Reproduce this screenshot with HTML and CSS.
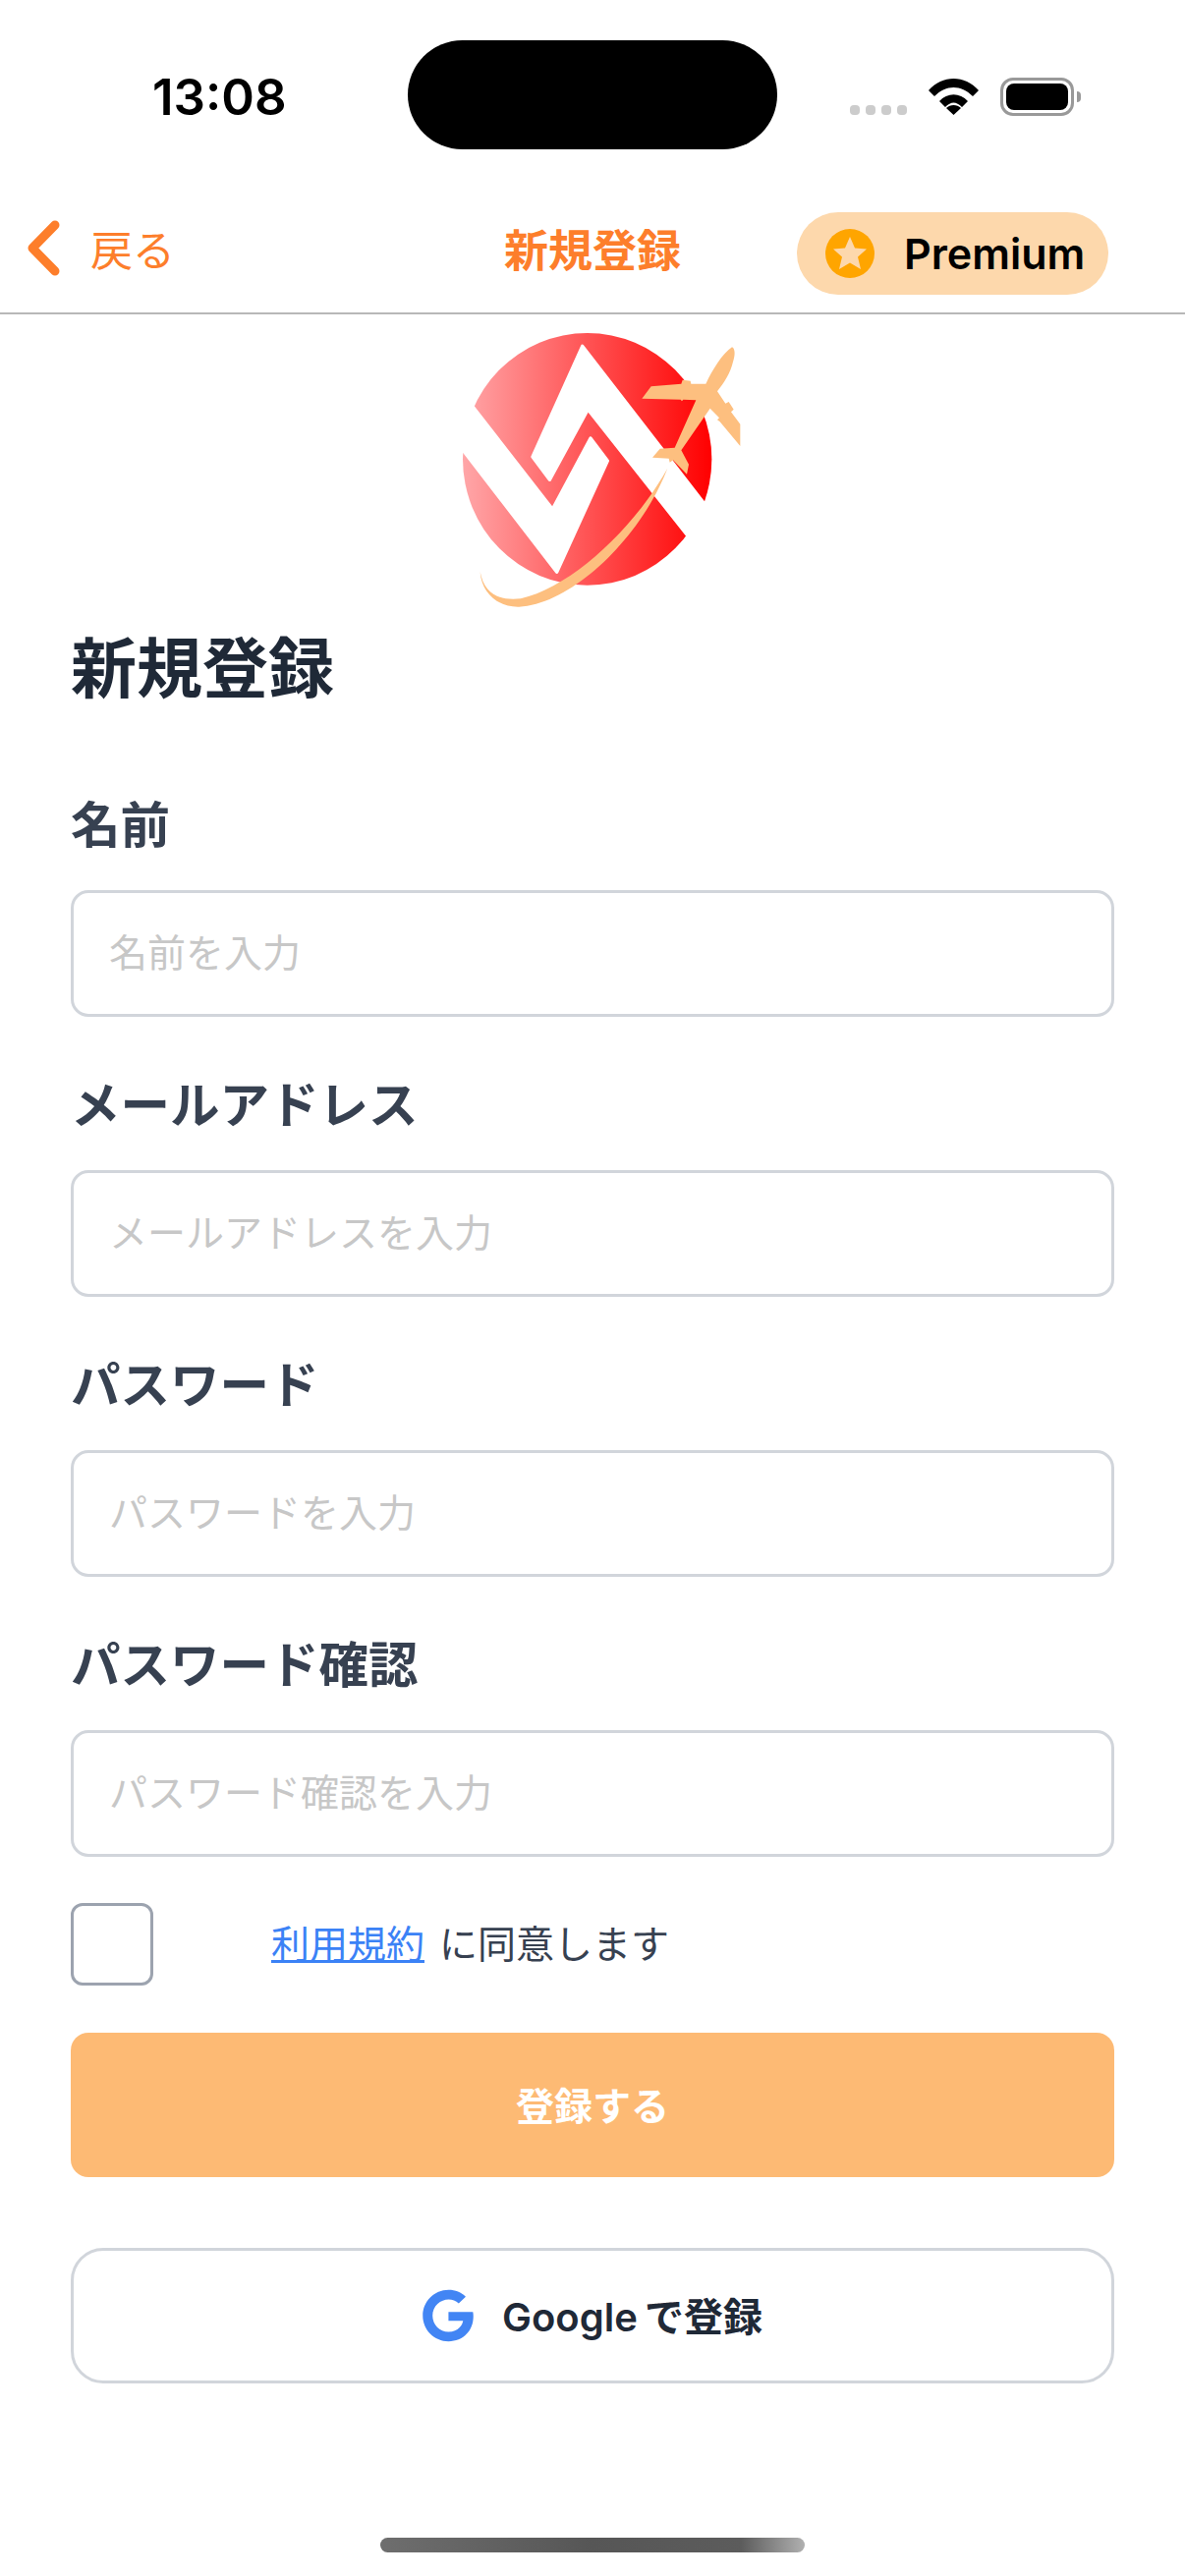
FILE: index.html
```html
<!DOCTYPE html>
<html lang="ja">
<head>
<meta charset="UTF-8">
<meta name="viewport" content="width=device-width, initial-scale=1.0">
<title>新規登録</title>
<link rel="stylesheet" href="styles.css">
</head>
<body>
<div class="page">
    <div class="status-bar">
        <div class="time">13:08</div>
        <div class="island"></div>
        <div class="status-icons">
            <div class="signal"><span></span><span></span><span></span><span></span></div>
            <svg class="wifi" viewBox="0 0 51 37" width="51" height="37">
                <path d="M0 12C14-4 37-4 51 12L45 18C33 6 18 6 6 18Z"/>
                <path d="M11 23C19 14 32 14 40 23L34 29C28 23 23 23 17 29Z"/>
                <path d="M25.5 37L18 30C22 26 29 26 33 30Z"/>
            </svg>
            <div class="battery"><div class="battery-level"></div></div>
            <div class="battery-nub"></div>
        </div>
    </div>

    <header class="nav">
        <a class="back">
            <svg viewBox="0 0 33 57" width="33" height="57">
                <path d="M28 5L5 28.5L28 52" fill="none" stroke="#fd7e2b" stroke-width="9" stroke-linecap="round" stroke-linejoin="round"/>
            </svg>
            <span>戻る</span>
        </a>
        <div class="nav-title">新規登録</div>
        <div class="premium">
            <svg class="premium-star" viewBox="0 0 50 50" width="50" height="50">
                <circle cx="25" cy="25" r="25" fill="#ffa500"/>
                <path d="M25 8L30 19.500L42 20.500L33 28.500L36 41L25 34.500L14 41L17 28.500L8 20.500L20 19.500Z" fill="#fdd8ac"/>
            </svg>
            <span>Premium</span>
        </div>
    </header>

    <svg class="logo" viewBox="0 0 990 930" width="330" height="310">
        <defs>
            <linearGradient id="logoRed" x1="0" y1="0" x2="1" y2="0">
                <stop offset="0" stop-color="#ffa6a8"/>
                <stop offset="1" stop-color="#ff0000"/>
            </linearGradient>
        </defs>
        <ellipse cx="473" cy="442" rx="380" ry="385" fill="url(#logoRed)"/>
        <g fill="#fff" stroke="#fff" stroke-width="10" stroke-linejoin="round">
            <path d="M458 97L900 668L850 765L475 290L358 505L306 435Z"/>
            <path d="M60 200L367 595L483 378L535 447L380 787L40 345Z"/>
        </g>
        <g fill="#fdbf7f">
            <path d="M146 786C150 850 200 895 265 893C425 885 635 685 718 470C615 655 425 832 270 868C200 876 158 850 146 786Z"/>
            <path d="M915 100C925 105 925 125 918 145C910 180 890 210 870 235L895 272L905 267L920 290L912 298L940 335V402L878 328L870 322L876 316L848 287L760 415L783 458L777 488L735 445L725 452L722 440L672 437L695 410L740 407L805 262L766 260L762 265L758 260L640 257L668 220L760 212L764 200L788 203L790 212L835 212C855 170 885 120 915 100Z"/>
        </g>
    </svg>

    <main class="form">
        <h1>新規登録</h1>

        <div class="fields">
            <div class="field">
                <label>名前</label>
                <input type="text" placeholder="名前を入力">
            </div>
            <div class="field">
                <label>メールアドレス</label>
                <input type="text" placeholder="メールアドレスを入力">
            </div>
            <div class="field">
                <label>パスワード</label>
                <input type="password" placeholder="パスワードを入力">
            </div>
            <div class="field">
                <label>パスワード確認</label>
                <input type="password" placeholder="パスワード確認を入力">
            </div>
        </div>

        <div class="terms">
            <input type="checkbox" class="terms-check">
            <p><a class="terms-link">利用規約</a><span class="terms-text">に同意します</span></p>
        </div>

        <button class="submit">登録する</button>

        <button class="google">
            <svg viewBox="0 0 488 512" width="52" height="54">
                <path fill="#4285f4" d="M488 261.800C488 403.300 391.100 504 248 504C110.800 504 0 393.200 0 256S110.800 8 248 8C314.800 8 371 32.500 414.300 72.900L346.800 137.800C258.500 52.600 94.300 116.600 94.300 256C94.300 342.500 163.400 412.600 248 412.600C346.200 412.600 383 342.200 388.800 305.700H248V220.400H484.100C486.400 233.100 488 245.300 488 261.800Z"/>
            </svg>
            <span>Google で登録</span>
        </button>
    </main>

    <div class="home-bar"></div>
</div>
</body>
</html>
```

FILE: styles.css
```css
* {
    box-sizing: border-box;
}

body {
    margin: 0;
    background-color: #fff;
    font-family: Inter, "Noto Sans CJK JP", sans-serif;
}

.page {
    display: flex;
    flex-direction: column;
    width: 1206px;
    height: 2622px;
    overflow: hidden;
}

/* status bar */
.status-bar {
    display: flex;
    height: 198px;
    padding-top: 41px;
}

.time {
    width: 415px;
    padding: 28px 0 0 155px;
    font-size: 51px;
    line-height: 60px;
    font-weight: 600;
    color: #000;
}

.island {
    width: 376px;
    height: 111px;
    border-radius: 56px;
    background-color: #000;
}

.status-icons {
    display: flex;
    align-items: flex-end;
    height: 76px;
    padding-left: 74px;
}

.signal {
    display: flex;
    gap: 6px;
    margin-right: 22px;
}

.signal span {
    width: 10px;
    height: 10px;
    border-radius: 4px;
    background-color: #ccc;
}

.wifi {
    margin-right: 22px;
}

.battery {
    width: 75px;
    height: 39px;
    margin-bottom: -1px;
    padding: 3px;
    border: 3px solid #999;
    border-radius: 13px;
}

.battery-level {
    height: 100%;
    border-radius: 8px;
    background-color: #000;
}

.battery-nub {
    width: 4px;
    height: 11px;
    margin: 0 0 13px 3px;
    border-radius: 0 4px 4px 0;
    background-color: #999;
}

/* header */
.nav {
    display: grid;
    grid-template-columns: 1fr auto 1fr;
    align-items: center;
    height: 122px;
    padding: 0 78px 0 28px;
    border-bottom: 2px solid #b8b8b8;
}

.back {
    display: flex;
    align-items: center;
    gap: 31px;
    margin-bottom: 12px;
    font-size: 43px;
    color: #fd7e2b;
}

.nav-title {
    margin: 0 0 12px 50px;
    font-size: 45px;
    font-weight: 700;
    color: #fd7e2b;
}

.premium {
    display: flex;
    align-items: center;
    justify-self: end;
    gap: 30px;
    width: 317px;
    height: 84px;
    padding-left: 29px;
    border-radius: 42px;
    background-color: #fdd8ac;
    font-size: 43px;
    line-height: 80px;
    font-weight: 600;
    color: #000;
}

.premium-star {
    flex-shrink: 0;
}

.logo {
    display: block;
    flex-shrink: 0;
    margin-left: 440px;
}

/* form */
.form {
    padding: 0 72px;
}

.form h1 {
    margin: 3px 0 70px;
    font-size: 67px;
    line-height: 96px;
    font-weight: 700;
    color: #1f2937;
}

.fields {
    display: flex;
    flex-direction: column;
    gap: 49px;
}

.field label {
    display: block;
    margin-bottom: 23px;
    font-size: 50.500px;
    line-height: 82px;
    padding-bottom: 2px;
    font-weight: 700;
    color: #374151;
}

.field input {
    display: block;
    width: 100%;
    height: 129px;
    padding: 0 36px 2px;
    border: 3px solid #d1d5db;
    border-radius: 18px;
    outline: none;
    font-family: inherit;
    font-size: 39px;
}

.field input::placeholder {
    color: #c7c7c7;
}

.terms {
    display: flex;
    align-items: center;
    gap: 120px;
    margin-top: 47px;
}

.terms-check {
    appearance: none;
    width: 84px;
    height: 84px;
    margin: 0;
    border: 3px solid #9ca3af;
    border-radius: 12px;
}

.terms p {
    margin: 0 0 6px;
    font-size: 39px;
    color: #374151;
}

.terms-link {
    color: #3b82f6;
    text-decoration: underline;
}

.terms-text {
    margin-left: 15px;
}

.submit {
    display: block;
    width: 100%;
    height: 147px;
    margin-top: 48px;
    padding-bottom: 5px;
    border: none;
    border-radius: 18px;
    background-color: #fdba74;
    font-family: inherit;
    font-size: 39px;
    font-weight: 600;
    color: #fff;
}

.google {
    display: flex;
    align-items: center;
    justify-content: center;
    gap: 29px;
    width: 100%;
    height: 138px;
    margin-top: 72px;
    padding: 0;
    border: 3px solid #d1d5db;
    border-radius: 33px;
    background-color: #fff;
    font-family: inherit;
    font-size: 40px;
    font-weight: 600;
    word-spacing: -3px;
    color: #1f2937;
}

.google span {
    margin-bottom: 3px;
}

.home-bar {
    align-self: center;
    width: 432px;
    height: 15px;
    margin-top: auto;
    margin-bottom: 24px;
    border-radius: 8px;
    background: linear-gradient(90deg, #6e6e6e, #565656 50%, #5c5c5c 85%, #b0b0b0);
}
```
